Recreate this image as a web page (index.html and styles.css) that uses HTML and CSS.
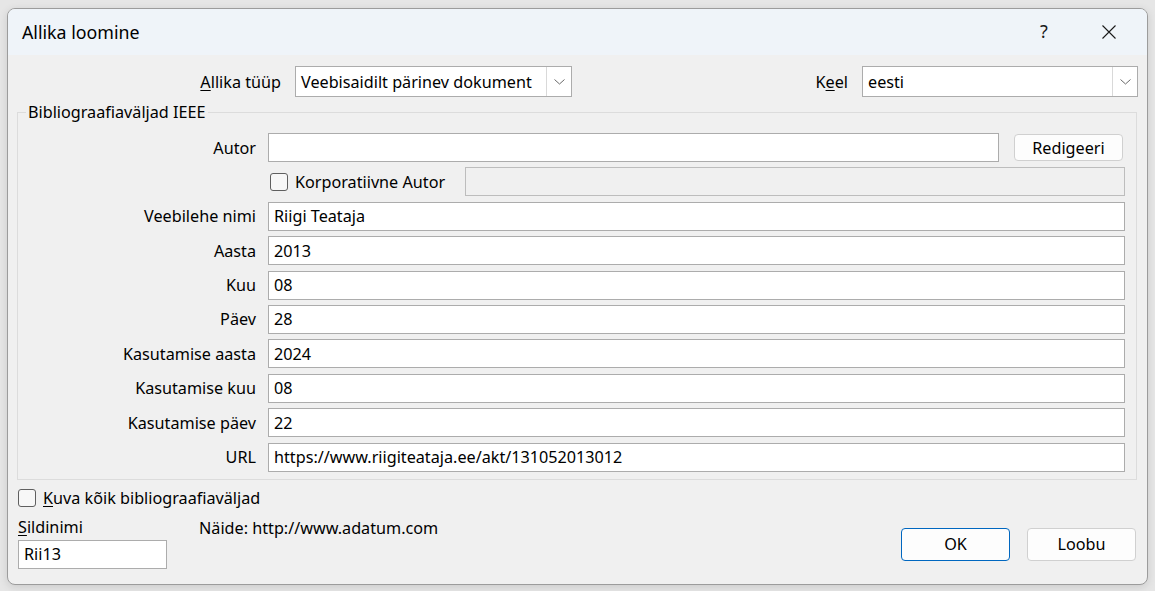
FILE: index.html
```html
<!DOCTYPE html>
<html lang="et">
<head>
<meta charset="utf-8">
<title>Allika loomine</title>
<link rel="stylesheet" href="styles.css">
</head>
<body>
<div class="window">
  <div class="titlebar">
    <div class="title">Allika loomine</div>
    <div class="caption-btn help">?</div>
    <div class="caption-btn close">
      <svg width="14" height="14" viewBox="0 0 14 14"><path d="M0.5 0.5 L13.5 13.5 M13.5 0.5 L0.5 13.5" stroke="#1a1a1a" stroke-width="1.1" fill="none"/></svg>
    </div>
  </div>
  <div class="content">
    <div class="toprow">
      <div class="lbl-type"><u>A</u>llika tüüp</div>
      <div class="select sel-type"><span class="sel-text">Veebisaidilt pärinev dokument</span><span class="sel-btn"><svg width="11" height="6" viewBox="0 0 11 6"><path d="M0.5 0.5 L5.5 5 L10.5 0.5" stroke="#6a6a6a" fill="none"/></svg></span></div>
      <div class="spacer"></div>
      <div class="lbl-keel">K<u>e</u>el</div>
      <div class="select sel-keel"><span class="sel-text">eesti</span><span class="sel-btn"><svg width="11" height="6" viewBox="0 0 11 6"><path d="M0.5 0.5 L5.5 5 L10.5 0.5" stroke="#6a6a6a" fill="none"/></svg></span></div>
    </div>

    <fieldset class="group">
      <legend>Bibliograafiaväljad IEEE</legend>
      <div class="grid">
        <div class="lbl">Autor</div>
        <div class="cell-row">
          <div class="field flex1"></div>
          <div class="btn btn-edit">Redigeeri</div>
        </div>

        <div class="lbl"></div>
        <div class="cell-row">
          <div class="corp">
            <span class="check"></span>
            <span>Korporatiivne Autor</span>
          </div>
          <div class="field disabled flex1"></div>
        </div>

        <div class="lbl">Veebilehe nimi</div>
        <div class="field">Riigi Teataja</div>

        <div class="lbl">Aasta</div>
        <div class="field">2013</div>

        <div class="lbl">Kuu</div>
        <div class="field">08</div>

        <div class="lbl">Päev</div>
        <div class="field">28</div>

        <div class="lbl">Kasutamise aasta</div>
        <div class="field">2024</div>

        <div class="lbl">Kasutamise kuu</div>
        <div class="field">08</div>

        <div class="lbl">Kasutamise päev</div>
        <div class="field">22</div>

        <div class="lbl">URL</div>
        <div class="field">https://www.riigiteataja.ee/akt/131052013012</div>
      </div>
    </fieldset>

    <div class="showall">
      <span class="check"></span>
      <span><u>K</u>uva kõik bibliograafiaväljad</span>
    </div>

    <div class="bottom">
      <div class="tagcol">
        <div class="taglbl"><u>S</u>ildinimi</div>
        <div class="field tagfield">Rii13</div>
      </div>
      <div class="example">Näide: http://www.adatum.com</div>
      <div class="spacer"></div>
      <div class="buttons">
        <div class="btn btn-ok">OK</div>
        <div class="btn btn-cancel">Loobu</div>
      </div>
    </div>
  </div>
</div>
</body>
</html>
```

FILE: styles.css
```css
html, body {
  margin: 0;
  padding: 0;
}
body {
  background: #e6e6e6;
  width: 1155px;
  height: 591px;
  overflow: hidden;
  font-family: "Noto Sans", "Open Sans", sans-serif;
  font-size: 16.2px;
  color: #000;
}
u {
  text-decoration: underline;
  text-underline-offset: 2px;
}
.window {
  margin: 8px 0 0 7px;
  width: 1141px;
  height: 577px;
  box-sizing: border-box;
  border: 1px solid #9c9c9c;
  border-radius: 8px;
  background: #f0f0f0;
  overflow: hidden;
  box-shadow: 0 2px 8px rgba(0,0,0,0.12);
}
.titlebar {
  height: 46px;
  background: #eff4f9;
  display: flex;
  align-items: center;
}
.title {
  font-size: 17.8px;
  padding-left: 14px;
  flex: 1;
  padding-bottom: 1px;
}
.caption-btn {
  width: 46px;
  height: 46px;
  display: flex;
  align-items: center;
  justify-content: center;
}
.help {
  font-size: 18px;
  color: #1a1a1a;
  margin-right: 19px;
  padding-bottom: 2px;
}
.close {
  margin-right: 15px;
}
.content {
  display: flex;
  flex-direction: column;
}
.toprow {
  display: flex;
  align-items: center;
  height: 31px;
  margin-top: 11px;
}
.lbl-type {
  width: 273px;
  text-align: right;
  margin-right: 14px;
  white-space: nowrap;
}
.select {
  height: 31px;
  box-sizing: border-box;
  border: 1px solid #acacac;
  background: #fff;
  display: flex;
  align-items: stretch;
}
.sel-text {
  flex: 1;
  padding-left: 5px;
  display: flex;
  align-items: center;
  white-space: nowrap;
  overflow: hidden;
}
.sel-btn {
  width: 24px;
  border-left: 1px solid #d9d9d9;
  display: flex;
  align-items: center;
  justify-content: center;
}
.sel-type {
  width: 277px;
}
.spacer {
  flex: 1;
}
.lbl-keel {
  margin-right: 14px;
}
.sel-keel {
  width: 276px;
  margin-right: 9px;
}
.group {
  margin: 5px 10px 0 9px;
  padding: 11px 11px 7px 0;
  border: 1px solid #dcdcdc;
  min-width: 0;
}
.group legend {
  margin-left: 8px;
  padding: 0 2px;
  line-height: 20px;
}
.grid {
  display: grid;
  grid-template-columns: 238px 1fr;
  column-gap: 12px;
  row-gap: 5.4px;
  align-items: center;
}
.lbl {
  text-align: right;
  white-space: nowrap;
}
.field {
  height: 29px;
  box-sizing: border-box;
  border: 1px solid #acacac;
  background: #fff;
  padding-left: 5px;
  display: flex;
  align-items: center;
  white-space: nowrap;
}
.field.disabled {
  background: #f0f0f0;
  border-color: #bdbdbd;
}
.flex1 {
  flex: 1;
}
.cell-row {
  display: flex;
  align-items: center;
}
.btn {
  box-sizing: border-box;
  border: 1px solid #d0d0d0;
  border-radius: 4px;
  background: #fdfdfd;
  display: flex;
  align-items: center;
  justify-content: center;
}
.btn-edit {
  width: 109px;
  height: 27px;
  margin-left: 15px;
  margin-right: 2px;
}
.corp {
  width: 197px;
  display: flex;
  align-items: center;
  gap: 7px;
  padding-left: 2px;
  box-sizing: border-box;
  white-space: nowrap;
}
.check {
  width: 18px;
  height: 18px;
  box-sizing: border-box;
  border: 1px solid #5f5f5f;
  border-radius: 3px;
  background: #f7f7f7;
  flex: none;
}
.showall {
  display: flex;
  align-items: center;
  gap: 7px;
  margin: 9px 0 0 10px;
  height: 19px;
}
.bottom {
  display: flex;
  align-items: flex-start;
  margin-top: 8px;
  padding-left: 10px;
}
.tagcol {
  display: flex;
  flex-direction: column;
  width: 149px;
}
.taglbl {
  height: 24px;
  line-height: 22px;
}
.tagfield {
  width: 149px;
}
.example {
  margin-left: 32px;
  line-height: 24px;
  white-space: nowrap;
}
.buttons {
  display: flex;
  gap: 17px;
  margin-top: 12px;
  margin-right: 11px;
}
.btn-ok, .btn-cancel {
  width: 109px;
  height: 33px;
}
.btn-ok {
  border: 1px solid #0067c0;
}
```
